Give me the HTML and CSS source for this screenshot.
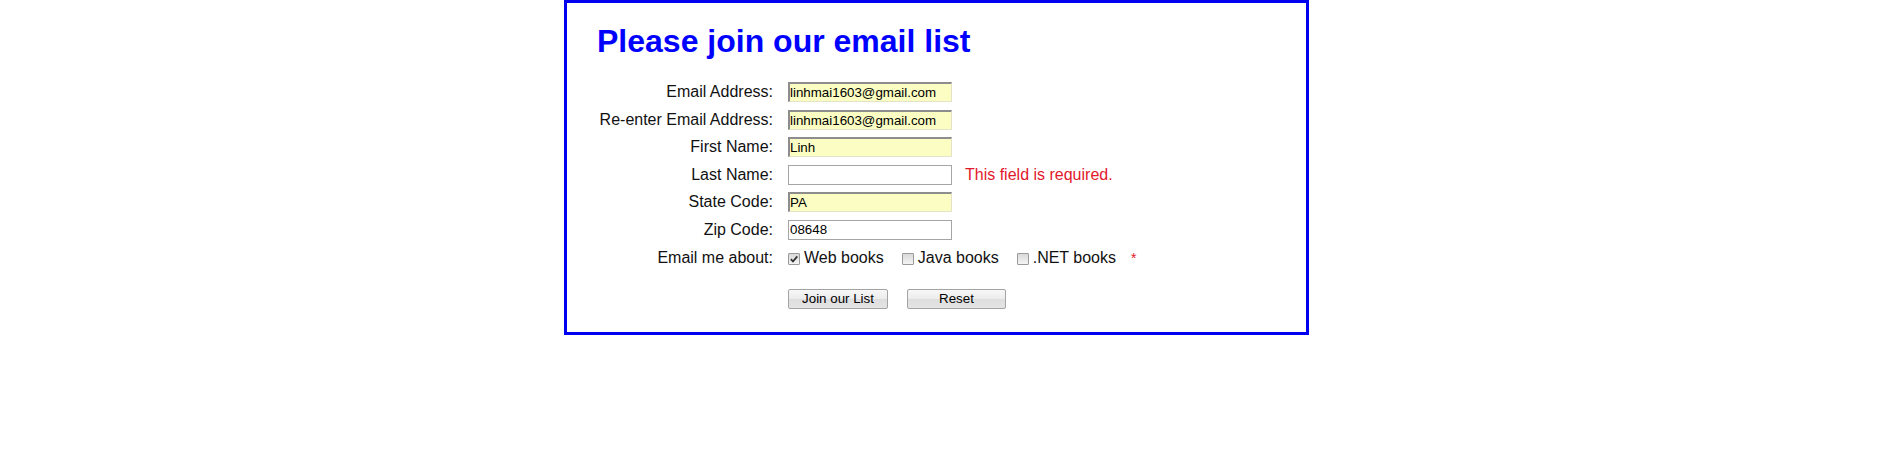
FILE: index.html
```html
<!DOCTYPE html>
<html lang="en">
<head>
<meta charset="utf-8">
<title>Join Email List</title>
<link rel="stylesheet" href="styles.css">
</head>
<body>
<div class="box">
  <h1 class="title">Please join our email list</h1>
  <form class="form">
    <label class="lbl" for="email1">Email Address:</label>
    <div class="ctl"><input class="field filled" id="email1" type="text" value="linhmai1603@gmail.com"></div>

    <label class="lbl" for="email2">Re-enter Email Address:</label>
    <div class="ctl"><input class="field filled" id="email2" type="text" value="linhmai1603@gmail.com"></div>

    <label class="lbl" for="first">First Name:</label>
    <div class="ctl"><input class="field filled" id="first" type="text" value="Linh"></div>

    <label class="lbl" for="last">Last Name:</label>
    <div class="ctl"><input class="field" id="last" type="text" value=""><span class="error">This field is required.</span></div>

    <label class="lbl" for="state">State Code:</label>
    <div class="ctl"><input class="field filled" id="state" type="text" value="PA"></div>

    <label class="lbl" for="zip">Zip Code:</label>
    <div class="ctl"><input class="field" id="zip" type="text" value="08648"></div>

    <span class="lbl lbl-checks">Email me about:</span>
    <div class="ctl checks">
      <label class="check"><span class="box-check"><svg width="10" height="10" viewBox="0 0 10 10"><path d="M1.8 5.2 L4 7.4 L8.3 2.4" fill="none" stroke="#333" stroke-width="1.7"/></svg></span>Web books</label>
      <label class="check"><span class="box-check"></span>Java books</label>
      <label class="check"><span class="box-check"></span>.NET books</label>
      <span class="star">*</span>
    </div>

    <span class="lbl"></span>
    <div class="ctl buttons">
      <button type="button" class="btn btn-join">Join our List</button>
      <button type="reset" class="btn btn-reset">Reset</button>
    </div>
  </form>
</div>
</body>
</html>
```
FILE: styles.css
```css
html, body {
  margin: 0;
  padding: 0;
  background: #ffffff;
}

body {
  font-family: "Liberation Sans", Arial, sans-serif;
  font-size: 16px;
  color: #111;
}

.box {
  width: 679px;
  margin: 0 0 0 564px;
  padding: 20px 30px 23px 30px;
  border: 3px solid #0000f0;
}

.title {
  margin: 0 0 22px 0;
  font-size: 32px;
  line-height: 37px;
  font-weight: bold;
  color: #0000ff;
}

.form {
  display: grid;
  grid-template-columns: 176px 1fr;
  grid-template-rows: repeat(7, 20px) 34px;
  column-gap: 15px;
  row-gap: 7.5px;
}

.lbl {
  text-align: right;
  line-height: 20px;
  white-space: nowrap;
}

.lbl-checks,
.checks {
  padding-top: 1px;
}

.ctl {
  display: flex;
  align-items: center;
  line-height: 20px;
}

.field {
  box-sizing: border-box;
  width: 164px;
  height: 20px;
  margin: 0;
  padding: 0 1px 0 1px;
  font-family: "Liberation Sans", Arial, sans-serif;
  font-size: 13.333px;
  color: #000;
  background: #ffffff;
  border: 1px solid #a5a5a5;
  outline: none;
}

.filled {
  background: #fbfdc3;
  border-top: 2px solid #8d8d8d;
  border-left: 2px solid #8d8d8d;
  border-right: 1px solid #e3e3c9;
  border-bottom: 1px solid #e3e3c9;
  padding-left: 0;
}

.error {
  margin-left: 13px;
  color: #e2182b;
  white-space: nowrap;
}

.check {
  display: flex;
  align-items: center;
  gap: 4px;
  margin-right: 18px;
  white-space: nowrap;
}

.box-check {
  box-sizing: border-box;
  width: 12px;
  height: 12px;
  margin-top: 2px;
  border: 1px solid #9a9a9a;
  border-radius: 1px;
  background: linear-gradient(#d9d9d9, #f4f4f4);
  display: flex;
  align-items: center;
  justify-content: center;
}

.box-check svg {
  display: block;
}

.star {
  margin-left: -3px;
  color: #e2182b;
  font-size: 14px;
}

.buttons {
  align-self: end;
  align-items: flex-end;
  gap: 19px;
}

.btn {
  box-sizing: border-box;
  height: 20px;
  margin: 0;
  padding: 0;
  font-family: "Liberation Sans", Arial, sans-serif;
  font-size: 13.333px;
  color: #000;
  border: 1px solid #a3a3a3;
  border-radius: 2px;
  background: linear-gradient(#f7f7f7 0%, #ececec 50%, #dedede 51%, #e4e4e4 100%);
}

.btn-join {
  width: 100px;
}

.btn-reset {
  width: 99px;
}
```
